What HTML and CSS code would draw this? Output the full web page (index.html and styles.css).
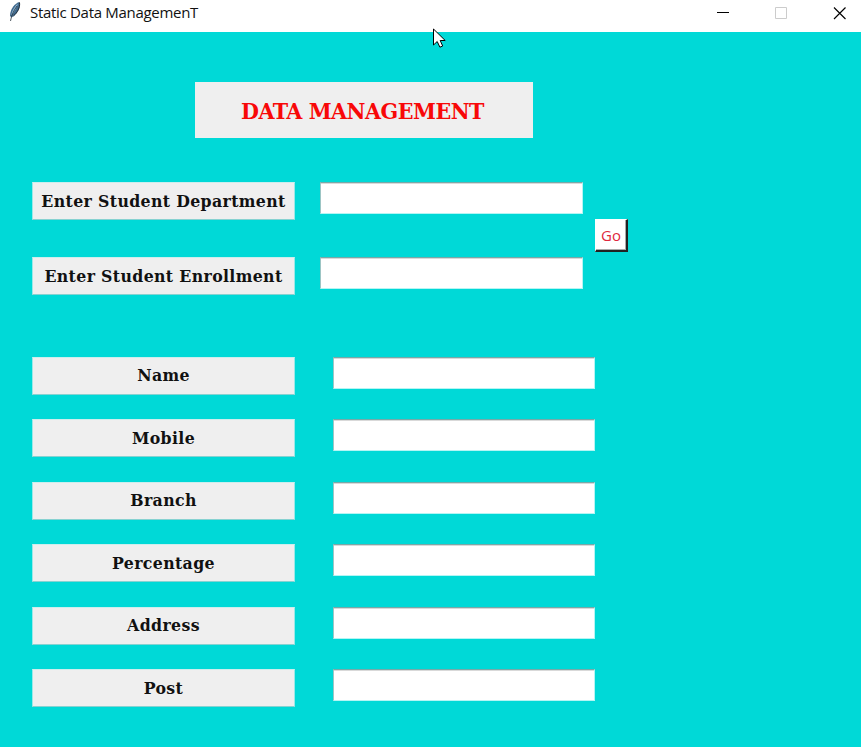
FILE: index.html
```html
<!DOCTYPE html>
<html lang="en">
<head>
<meta charset="utf-8">
<title>Static Data ManagemenT</title>
<link rel="stylesheet" href="styles.css">
</head>
<body>
<header class="titlebar">
  <svg class="feather" width="14" height="22" viewBox="0 0 14 22">
    <path d="M11.500 2C7 3 2 9 2 16l1.500 1.500C8.500 15 13 8 11.500 2z" fill="#41698c"/>
    <path d="M10 3.500C7 6 3.500 11 3.400 15.500 6.500 12 8.500 8 10 3.500z" fill="#8fb6d6"/>
    <path d="M9 6C6 10 3.500 15 2.500 21" fill="none" stroke="#26323c" stroke-width=".8"/>
    <path d="M11.500 2.500c.8 5-2 10-6 13.500" fill="none" stroke="#17212b" stroke-width=".9"/>
  </svg>
  <span class="caption">Static Data ManagemenT</span>
  <svg class="controls" width="128" height="14" viewBox="0 0 128 14" fill="none">
    <path d="M0 6.500h12" stroke="#000"/>
    <path d="M58.500 1.500h11v11h-11z" stroke="#ccc"/>
    <path d="M117 1.500l11.500 11.500M128.500 1.500L117 13" stroke="#000" stroke-width="1.150"/>
  </svg>
</header>
<main class="window">
  <h1 class="heading">DATA MANAGEMENT</h1>
  <section class="query">
    <div class="pairs">
      <label class="label" for="dept">Enter Student Department</label><input class="field" id="dept">
      <label class="label" for="enroll">Enter Student Enrollment</label><input class="field" id="enroll">
    </div>
    <button class="go">Go</button>
  </section>
  <section class="details">
    <label class="label" for="name">Name</label><input class="field" id="name">
    <label class="label" for="mobile">Mobile</label><input class="field" id="mobile">
    <label class="label" for="branch">Branch</label><input class="field" id="branch">
    <label class="label" for="percentage">Percentage</label><input class="field" id="percentage">
    <label class="label" for="address">Address</label><input class="field" id="address">
    <label class="label" for="post">Post</label><input class="field" id="post">
  </section>
</main>
<svg class="cursor" width="14" height="21" viewBox="0 0 14 21">
  <path d="M.5 1v16l3.700-3.500 2.700 5.700 2.800-1.200-2.500-5.500h5z" fill="#fff" stroke="#000"/>
</svg>
</body>
</html>
```
FILE: styles.css
```css
* { box-sizing: border-box; }
body { margin: 0; width: 861px; height: 747px; overflow: hidden; background: #00d9d7; }
.titlebar { display: flex; align-items: flex-start; height: 32px; background: #fff; }
.feather { margin: 0 0 0 8px; flex: none; }
.caption { margin-left: 8px; font: 15px/25px "Open Sans", sans-serif; letter-spacing: -.3px; color: #111; white-space: nowrap; }
.controls { margin: 6px 16px 0 auto; overflow: visible; }
.window { padding: 50px 0 0 32px; font-family: "DejaVu Serif Condensed", "DejaVu Serif", serif; }
.heading { display: flex; align-items: center; justify-content: center; width: 338px; height: 56px; margin: 0 0 44px 163px; padding: 1px 3px 0 0; background: #efefef; color: #f80808; font-size: 23px; font-stretch: condensed; letter-spacing: -.5px; line-height: 1; white-space: nowrap; }
.query { display: flex; gap: 12px; margin-bottom: 61.600px; }
.pairs { display: grid; grid-template-columns: 263px 263px; column-gap: 25px; row-gap: 37px; }
.details { display: grid; grid-template-columns: 263px 262px; column-gap: 38px; row-gap: 24.500px; }
.label { display: flex; align-items: center; justify-content: center; height: 38px; padding-top: 1px; background: #efefef; color: #111; font-size: 17.500px; font-weight: 700; font-stretch: condensed; letter-spacing: .36px; line-height: 1; white-space: nowrap; border: 1px solid; border-color: #cdeeed #9be9e8 #86d2d1 #9be9e8; }
.field { width: 100%; height: 32px; margin: 0; padding: 2px; border: 1px solid; border-color: #78a9a8 #b4f5f4 #b4f5f4 #9cc5c4; border-radius: 0; background: #fff; outline: 0; box-shadow: inset 0 1px #d9d9d9; }
.go { width: 33px; height: 33px; margin-top: 37px; padding: 0; border: solid; border-width: 1px 2px 2px 1px; border-color: #fff #222 #222 #fff; border-radius: 0; background: #fff; box-shadow: inset -1px -1px #aaa; color: #e0263c; font: 15px/1 "Open Sans", sans-serif; }
.cursor { position: absolute; left: 433px; top: 28px; }
```
